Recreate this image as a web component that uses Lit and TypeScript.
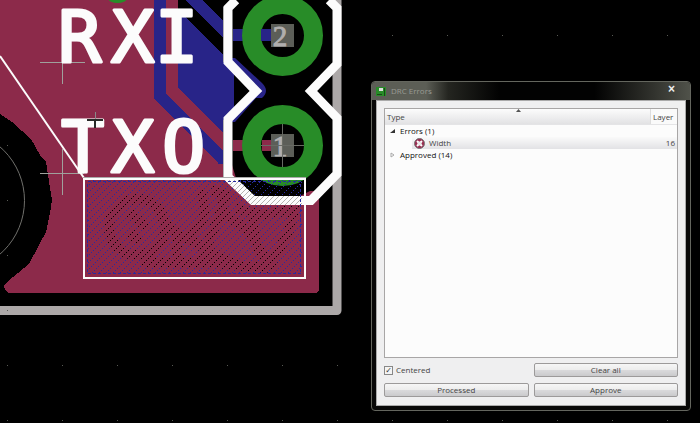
import { LitElement, html, css, svg } from "lit";
import { customElement, property } from "lit/decorators.js";

const GRID = 55;
const columns = Array.from({ length: 13 }, (_, i) => 7 + i * GRID);
const rows = Array.from({ length: 8 }, (_, i) => 35 + i * GRID);
const OUTLINE = "M236 0L228 8V62L256 91L228 119V177L253 200.500H311L337 174V118L311 91L337 64V8L329 0";
const DOTS = "M0 0h1v1h-1zM5 2h1v1h-1zM3 4h1v1h-1zM1 6h1v1h-1zM6 8h1v1h-1zM4 10h1v1h-1zM2 12h1v1h-1z";

@customElement("board-view")
export class BoardView extends LitElement {
  static styles = css`
    :host { display: block; height: 100%; }
    svg { display: block; width: 100%; height: 100%; }
    .crisp { shape-rendering: crispEdges; }
    .copper { fill: #8c2a4a; }
    .bottom { fill: #282488; }
    .silk {
      font: 72px "DejaVu Sans Mono", monospace;
      fill: #fcfcfc;
      stroke: #fcfcfc;
      stroke-width: 3;
      stroke-linejoin: round;
    }
    .pin { font: 29px "Liberation Serif", serif; fill: #b0aeae; stroke: #b0aeae; text-anchor: middle; }
    .edge { fill: none; stroke: #aca8a8; stroke-width: 9; stroke-linejoin: round; }
    .pad { fill: #000; stroke: #288c28; stroke-width: 19; }
    .outline { fill: none; stroke: #fcfcfc; stroke-width: 9; }
    .marked { fill: none; stroke: url(#lines); stroke-width: 9; }
    .cross { stroke: #a0a09c; fill: none; }
    .frame { fill: none; stroke: #fcfcfc; stroke-width: 2; }
    .grid { fill: #585a54; }
    .wire { stroke: #fcfcfc; stroke-width: 2; }
  `;

  render() {
    return html`<svg viewBox="0 0 700 423" preserveAspectRatio="xMinYMin slice" role="img" aria-label="Board layout">
      <defs>
        <pattern id="blue" width="7" height="14" patternUnits="userSpaceOnUse">
          <path class="crisp" fill="#282ca0" d=${DOTS} />
        </pattern>
        <pattern id="black" width="7" height="14" patternUnits="userSpaceOnUse">
          <rect width="7" height="14" fill="#8c2a4a" />
          <path class="crisp" fill="#000" d=${DOTS} />
        </pattern>
        <pattern id="lines" width="5" height="5" patternUnits="userSpaceOnUse">
          <rect width="5" height="5" fill="#fcfcfc" />
          <path d="M-1 6L6 -1M-1 1L1 -1M4 6L6 4" stroke="#b4b4b0" />
        </pattern>
        <clipPath id="check"><rect x="87" y="180" width="215" height="94" /></clipPath>
        <clipPath id="overlap"><rect x="226" y="178" width="76" height="28" /></clipPath>
        <clipPath id="below"><path d="M87 180H226L251 206H302V274H87Z" /></clipPath>
      </defs>
      <rect width="700" height="423" fill="#000" />
      <path class="edge" d="M0 310.500H337V0" />
      <g class="crisp">
        <path class="copper" d="M0 0H178V88L236 146V160L260 190L306 200L311 193H319V290L316 293H9L5 290L4 286L7 282L29 264L39 245L46 232L50 213L52 200L50 188L46 162L40 155L31 139L12 122L0 114Z" />
        <path class="bottom" d="M154 0H166V94L223 150V164H219L154 98Z" />
        <path class="bottom" d="M178 10L222 54L234 60V122L223 133L178 88Z" />
        <path class="bottom" d="M185 0H202L224 21V38Z" />
      </g>
      <ellipse cx="117.500" cy="-1" rx="9" ry="4" fill="#288c28" />
      <path fill="#000" d=${OUTLINE} />
      <path class="bottom" d="M228 58H235L262 83Q270 91 262 98L256 98L235 122H228V119L256 91L228 62Z" />
      <path class="copper" d="M232 165L236 178H232ZM300 196L310 191H318L312 199Z" />
      <path class="outline" d=${OUTLINE} />
      <path d="M223.500 7V62M223.500 120V177" stroke="#b4b4b4" fill="none" />
      <path class="bottom crisp" d="M233 29H272V41H233Z" />
      <path class="copper crisp" d="M233 140H272V151H233Z" />
      <circle class="pad" cx="282.500" cy="35.500" r="31" />
      <circle class="pad" cx="282.500" cy="145.500" r="31" />
      <path class="bottom crisp" d="M261 29H272V41H261Z" />
      <path class="copper crisp" d="M262 140H272V151H262Z" />
      <path class="crisp" fill="#5c5e58" d="M271 24H294V47H271ZM271 134H294V157H271Z" />
      <text class="pin" x="280" y="46">2</text>
      <text class="pin" x="280" y="156">1</text>
      <path stroke="#686a64" class="crisp" d="M261 145.500H304M282.500 124V167" />

      <rect x="87" y="180" width="215" height="94" fill="url(#blue)" />
      <g clip-path="url(#below)" fill="none" stroke="url(#black)" stroke-width="10">
        <circle cx="137" cy="227" r="28" />
        <path d="M130 213L146 227M128 231L140 242M160 215L177 234V266M142 262H205L268 268M187 244L205 215L202 190M211 190L224 195L222 212L249 231L270 268M236 208L260 215L292 210M184 235L210 252L238 264M272 212L294 211L289 230L278 252L268 268M227 196L211 236L200 260M252 215L258 252" />
      </g>
      <path class="marked" clip-path="url(#overlap)" d=${OUTLINE} />
      <rect class="crisp" x="87.500" y="181.500" width="213" height="92" fill="none" stroke="#282ca0" stroke-dasharray="3 2" />

      <path class="cross crisp" d="M40 62.500H85M62.500 40V84M40 173.500H84M62.500 149V195" />
      <text class="silk" y="62"><tspan x="58">R</tspan><tspan x="111">X</tspan><tspan x="155">I</tspan></text>
      <text class="silk" y="172"><tspan x="61">T</tspan><tspan x="111">X</tspan><tspan x="162">O</tspan></text>
      <path class="crisp" stroke="#282a28" stroke-width="2" d="M87 120H103M95 119V128" />
      <path class="crisp" stroke="#888" d="M95 112V119" />
      <path class="wire" d="M0 56L84 178" />
      <rect class="frame crisp" x="84" y="179" width="221" height="99" />
      <path class="crisp" stroke="#aaa" d="M83 177.500H306" />
      <circle cx="-46.500" cy="200.500" r="71" fill="none" stroke="#70706c" />
      <g class="grid crisp">
        ${rows.map((y) => columns.map((x) =>
          x > 342 || y > 315 || (x === 7 && y > 144)
            ? svg`<rect x=${x} y=${y} width="1" height="1" />` : null))}
      </g>
    </svg>`;
  }
}

@customElement("drc-dialog")
export class DrcDialog extends LitElement {
  @property({ type: Boolean }) centered = true;

  static styles = css`
    :host {
      display: flex;
      flex-direction: column;
      box-sizing: border-box;
      padding: 0 4px 4px;
      border: 1px solid #64665e;
      border-radius: 4px;
      background: #080808;
      color: #444;
      font: 8px/12px "Open Sans", "Noto Sans", sans-serif;
    }
    .bar {
      display: flex;
      align-items: center;
      gap: 5px;
      height: 18px;
      margin: 0 -4px;
      padding: 0 10px 0 4px;
      border-radius: 3px 3px 0 0;
      background: linear-gradient(90deg, #5c5e56 0, #5c5e56 17%, #242520 24%, #020202 40%, #020202 70%, #30312c 88%, #50524a);
    }
    .bar svg { width: 10px; height: 10px; }
    h1 { flex: 1; margin: 0; font: inherit; color: #999b94; }
    .close { height: 18px; padding: 0 5px 4px; border: 0; background: none; color: #eee; font: bold 12px/12px "Liberation Sans", sans-serif; }
    .body {
      display: flex;
      flex: 1;
      flex-direction: column;
      gap: 5px;
      padding: 7px 7px 8px;
      border: 1px solid #aaa;
      background: #efeff0;
    }
    .list { flex: 1; border: 1px solid #a8a6a6; background: #fcfcfc; }
    table { width: 100%; border-collapse: collapse; }
    th, td { height: 12px; padding: 0 2px; text-align: left; font-weight: normal; }
    thead th { height: 15px; background: linear-gradient(#fcfcfc, #e2e2e4); border-bottom: 1px solid #e4e4e6; }
    thead th:first-child { position: relative; }
    thead th:last-child { width: 22px; background: #fafafa; border-left: 1px solid #ddd; }
    .sort { position: absolute; left: 131px; top: 0; width: 5px; height: 3px; }
    td:last-child { text-align: right; }
    .group { color: #111; font-weight: bold; }
    .cell { display: flex; align-items: center; gap: 5px; padding-left: 3px; }
    .cell svg { width: 5px; height: 6px; }
    .item td:last-child, .item .hit { background: linear-gradient(#fafafa, #e2e2e5); }
    .item td:first-child { padding: 0 0 0 27px; }
    .hit { display: flex; align-items: center; gap: 4px; height: 12px; padding-left: 2px; }
    .hit svg { width: 11px; height: 11px; }
    .actions { display: grid; grid-template-columns: 1fr 1fr; gap: 6px 5px; }
    .actions button {
      height: 14px;
      padding: 0;
      border: 1px solid #9c9a9a;
      border-radius: 2px;
      background: linear-gradient(#f6f6f6 0, #ececec 50%, #dadadc 50%, #cacacc);
      color: #444;
      font: inherit;
      line-height: 12px;
    }
    label { display: flex; align-items: center; gap: 3px; }
    input {
      appearance: none;
      display: grid;
      place-items: center;
      width: 9px;
      height: 9px;
      margin: 0;
      border: 1px solid #888;
      background: #f4f4f4;
      font: bold 8px/8px "DejaVu Sans", sans-serif;
    }
    input:checked::before { content: "✓"; color: #333; }
  `;

  render() {
    return html`
      <header class="bar">
        <svg viewBox="0 0 10 10" aria-hidden="true">
          <path fill="#288c28" d="M0 1H10V10H0Z" /><path fill="#ddd" d="M3 2H7V5H3Z" /><path fill="#184818" d="M8 2H9V10H8ZM1 8H6V9H1Z" />
        </svg>
        <h1>DRC Errors</h1>
        <button class="close" aria-label="Close">×</button>
      </header>
      <section class="body">
        <div class="list">
          <table>
            <thead>
              <tr>
                <th>Type<svg class="sort" viewBox="0 0 5 3" aria-hidden="true"><path fill="#555" d="M0 3L2.500 0L5 3Z" /></svg></th>
                <th>Layer</th>
              </tr>
            </thead>
            <tbody>
              <tr class="group">
                <td><div class="cell"><svg viewBox="0 0 5 6" aria-hidden="true"><path fill="#333" d="M5 1V5H0Z" /></svg>Errors (1)</div></td>
                <td></td>
              </tr>
              <tr class="item">
                <td><div class="hit">
                  <svg viewBox="0 0 11 11" aria-hidden="true">
                    <circle cx="5.500" cy="5.500" r="5" fill="#982c50" stroke="#777" />
                    <path d="M3 3L8 8M8 3L3 8" stroke="#fff" stroke-width="2" />
                    <circle cx="5.500" cy="5.500" r="2" fill="#e8e8e8" />
                  </svg>Width</div></td>
                <td>16</td>
              </tr>
              <tr class="group">
                <td><div class="cell"><svg viewBox="0 0 5 6" aria-hidden="true"><path fill="none" stroke="#aaa" d="M1 1L4 3L1 5Z" /></svg>Approved (14)</div></td>
                <td></td>
              </tr>
            </tbody>
          </table>
        </div>
        <div class="actions">
          <label><input type="checkbox" .checked=${this.centered} />Centered</label>
          <button>Clear all</button>
          <button>Processed</button>
          <button>Approve</button>
        </div>
      </section>`;
  }
}

@customElement("app-root")
export class AppRoot extends LitElement {
  static styles = css`
    :host { display: block; position: relative; height: 100vh; overflow: hidden; background: #000; }
    drc-dialog { position: absolute; top: 81px; right: 9px; bottom: 12px; width: 320px; }
  `;

  render() {
    return html`<board-view></board-view><drc-dialog></drc-dialog>`;
  }
}
